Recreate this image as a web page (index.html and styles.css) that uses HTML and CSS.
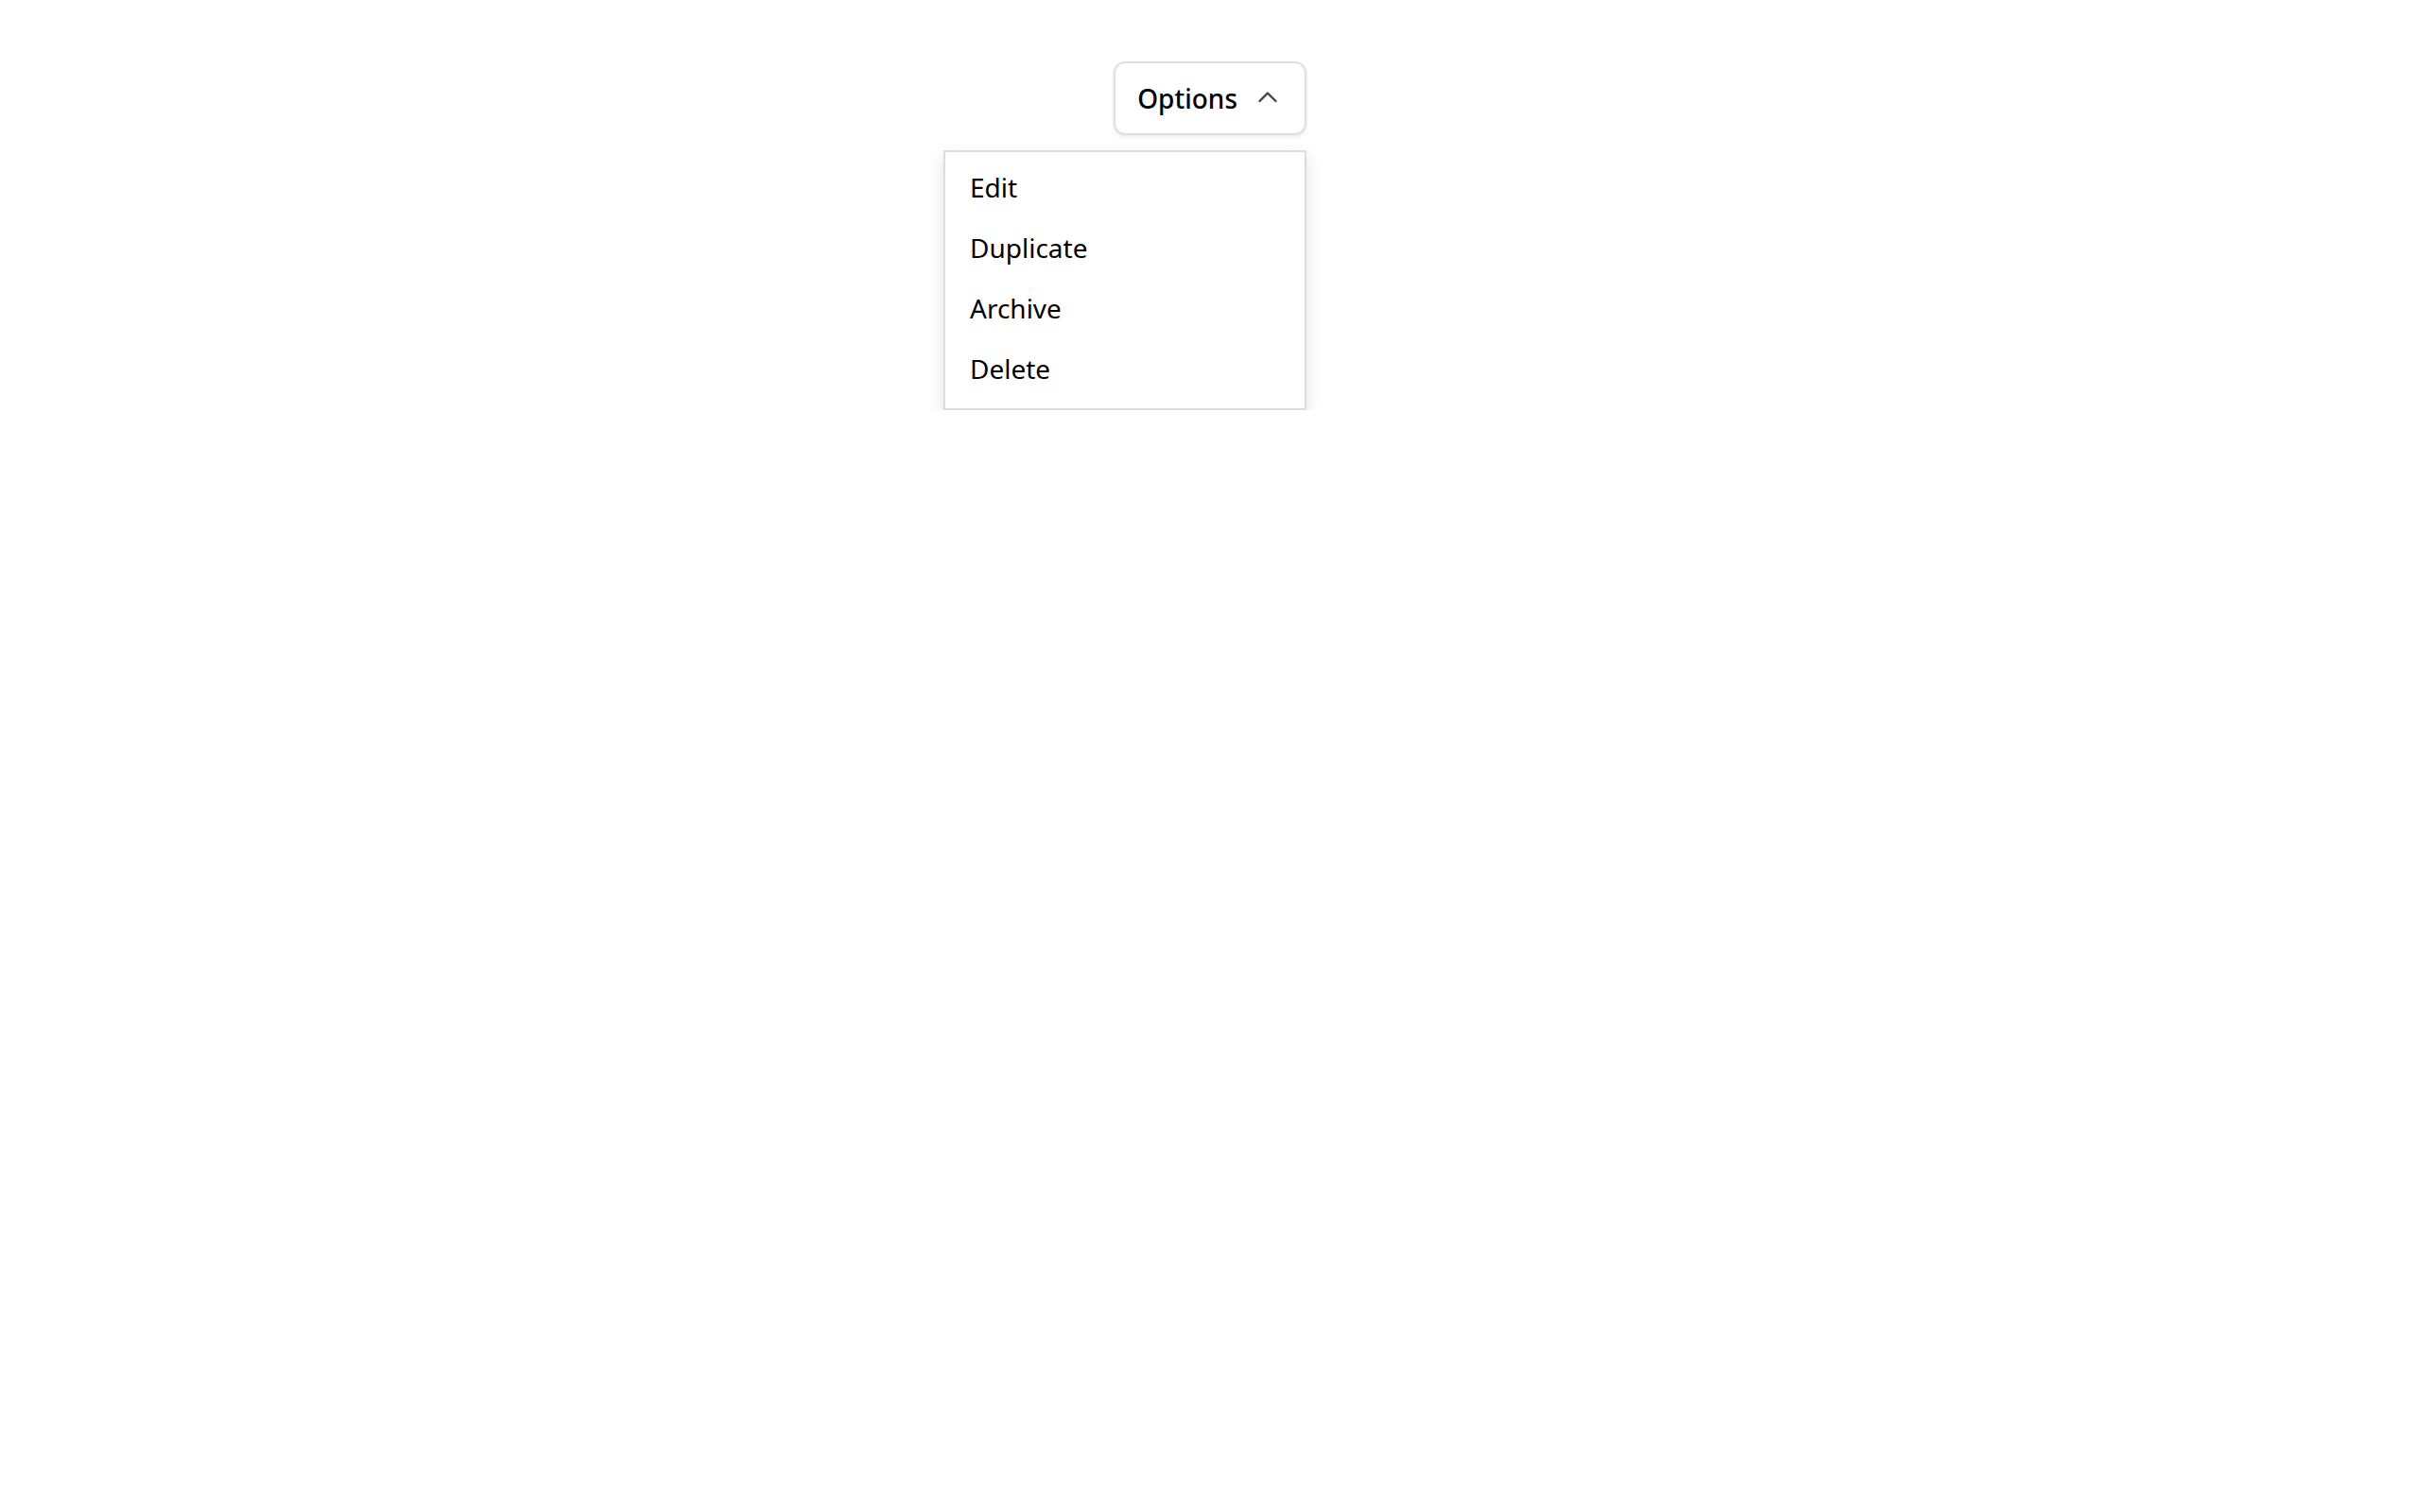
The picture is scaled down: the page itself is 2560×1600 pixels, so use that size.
FILE: index.html
```html
<!DOCTYPE html>
<html lang="en">
<head>
<meta charset="utf-8">
<title>Options menu</title>
<link rel="stylesheet" href="styles.css">
</head>
<body>
<div class="page">
  <div class="dropdown">
    <button class="trigger" type="button">
      <span class="trigger-label">Options</span>
      <svg class="chevron" viewBox="0 0 24 24" width="24" height="24" aria-hidden="true">
        <polyline points="3.5,15 12,6.5 20.5,15" fill="none" stroke="#444" stroke-width="2.4" stroke-linecap="round" stroke-linejoin="round"/>
      </svg>
    </button>
    <ul class="menu">
      <li class="menu-item">Edit</li>
      <li class="menu-item">Duplicate</li>
      <li class="menu-item">Archive</li>
      <li class="menu-item">Delete</li>
    </ul>
  </div>
</div>
</body>
</html>
```

FILE: styles.css
```css
html, body {
  margin: 0;
  padding: 0;
  background: #ffffff;
}

body {
  font-family: "Noto Sans", "Open Sans", sans-serif;
  color: #000000;
}

.page {
  padding: 65px 0 0 998px;
}

.dropdown {
  display: flex;
  flex-direction: column;
  align-items: flex-end;
  gap: 16px;
  width: 384px;
}

.trigger {
  display: flex;
  align-items: center;
  gap: 20px;
  box-sizing: border-box;
  height: 78px;
  padding: 0 27px 0 23px;
  border: 2px solid #dedee3;
  border-radius: 12px;
  background: #ffffff;
  box-shadow: 0 2px 4px rgba(0, 0, 0, 0.08);
  font-family: inherit;
  font-size: 28px;
  font-weight: 500;
  color: #000000;
  cursor: pointer;
}

.trigger-label {
  line-height: 1;
}

.chevron {
  display: block;
  flex: none;
}

.menu {
  display: block;
  box-sizing: border-box;
  width: 384px;
  margin: 0;
  padding: 5px 0 10px;
  list-style: none;
  background: #ffffff;
  border: 2px solid #dcdce0;
  box-shadow: 0 6px 16px rgba(0, 0, 0, 0.12);
}

.menu-item {
  display: block;
  height: 64px;
  line-height: 64px;
  padding: 0 26px;
  font-size: 28px;
  font-weight: 400;
  color: #000000;
}
```
